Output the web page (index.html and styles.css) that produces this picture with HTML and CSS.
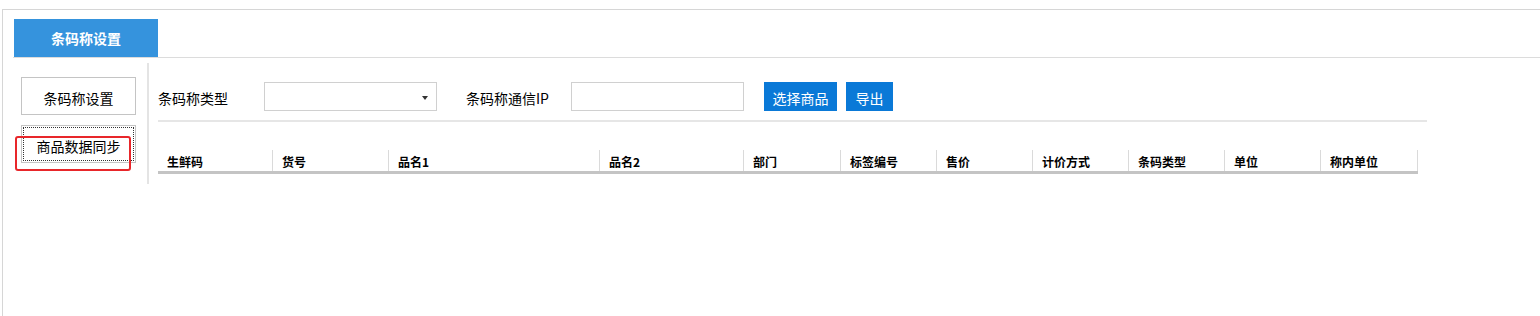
FILE: index.html
```html
<!DOCTYPE html>
<html lang="zh-CN">

<head>
    <meta charset="UTF-8">
    <meta name="viewport" content="width=device-width, initial-scale=1.0">
    <title>条码称设置</title>
    <link rel="stylesheet" href="styles.css">
</head>

<body>

    <div class="frame">
        <!-- 标签页 -->
        <div class="tabs">
            <div class="tab active">条码称设置</div>
        </div>

        <div class="content">
            <!-- 左侧菜单 -->
            <div class="sidebar">
                <button class="side-btn">条码称设置</button>
                <button class="side-btn focused">商品数据同步</button>
                <div class="mark"></div>
            </div>

            <!-- 主体 -->
            <div class="main">
                <div class="toolbar">
                    <label class="field-label">条码称类型</label>
                    <div class="select-box"><span class="arrow"></span></div>
                    <label class="field-label ip-label">条码称通信IP</label>
                    <input class="text-box" type="text">
                    <button class="btn-blue pick">选择商品</button>
                    <button class="btn-blue export">导出</button>
                </div>

                <div class="grid-header">
                    <div class="col" style="width: 115px;">生鲜码</div>
                    <div class="col" style="width: 116px;">货号</div>
                    <div class="col" style="width: 211px;">品名1</div>
                    <div class="col" style="width: 144px;">品名2</div>
                    <div class="col" style="width: 97px;">部门</div>
                    <div class="col" style="width: 96px;">标签编号</div>
                    <div class="col" style="width: 96px;">售价</div>
                    <div class="col" style="width: 96px;">计价方式</div>
                    <div class="col" style="width: 96px;">条码类型</div>
                    <div class="col" style="width: 96px;">单位</div>
                    <div class="col" style="width: 97px;">称内单位</div>
                </div>
            </div>
        </div>
    </div>

</body>

</html>
```

FILE: styles.css
```css
/* 基本样式 */
body {
    margin: 0;
    font-family: "Noto Sans CJK SC", "Liberation Sans", sans-serif;
    background-color: #ffffff;
    color: #000;
    overflow: hidden;
}

/* 外框 */
.frame {
    margin: 9px 0 0 2px;
    border-top: 1px solid #d6d6d6;
    border-left: 1px solid #d6d6d6;
    height: 320px;
}

/* 标签页 */
.tabs {
    padding: 9px 0 0 0;
    margin-left: 10px;
    border-bottom: 1px solid #dcdcdc;
    display: flex;
}

.tab {
    margin-left: 1px;
    width: 144px;
    height: 38px;
    display: flex;
    justify-content: center;
    align-items: center;
    font-size: 14px;
    font-weight: bold;
    color: #fff;
}

.tab.active {
    background-color: #3593dd;
}

/* 内容区 */
.content {
    display: flex;
}

.sidebar {
    position: relative;
    width: 146px;
    height: 121px;
    margin-top: 5px;
    border-right: 2px solid #e4e4e4;
    box-sizing: border-box;
    padding: 14px 0 0 18px;
    display: flex;
    flex-direction: column;
    gap: 10px;
}

.side-btn {
    width: 115px;
    height: 38px;
    padding: 3px 0 0 0;
    background-color: #fff;
    border: 1px solid #c4c4c4;
    font-family: inherit;
    font-size: 14px;
    color: #000;
}

.side-btn.focused {
    outline: 1px dotted #333;
    outline-offset: -3px;
}

/* 红色标注框 */
.mark {
    position: absolute;
    left: 12px;
    top: 73px;
    width: 112px;
    height: 31px;
    border: 2px solid #e8262a;
    border-radius: 3px;
}

.main {
    padding: 24px 0 0 9px;
}

/* 工具栏 */
.toolbar {
    width: 1269px;
    height: 29px;
    padding-bottom: 9px;
    border-bottom: 2px solid #e6e6e6;
    display: flex;
    align-items: center;
}

.field-label {
    width: 106px;
    font-size: 14px;
    padding-top: 2px;
}

.ip-label {
    width: 105px;
    margin-left: 29px;
}

.select-box {
    position: relative;
    width: 173px;
    height: 29px;
    box-sizing: border-box;
    border: 1px solid #d0d0d0;
}

.arrow {
    position: absolute;
    right: 8px;
    top: 13px;
    border-left: 3px solid transparent;
    border-right: 3px solid transparent;
    border-top: 4px solid #333;
}

.text-box {
    width: 173px;
    height: 29px;
    box-sizing: border-box;
    border: 1px solid #d0d0d0;
    margin: 0;
    padding: 0;
}

.btn-blue {
    height: 29px;
    border: none;
    background-color: #0a79d7;
    color: #fff;
    font-family: inherit;
    font-size: 14px;
    padding: 2px 0 0 0;
}

.pick {
    width: 73px;
    margin-left: 20px;
}

.export {
    width: 47px;
    margin-left: 9px;
}

/* 表头 */
.grid-header {
    display: flex;
    margin-top: 28px;
    width: 1260px;
    border-bottom: 3px solid #c4c4c4;
}

.col {
    height: 21px;
    box-sizing: border-box;
    border-right: 1px solid #dadada;
    padding: 2px 0 0 9px;
    font-size: 12px;
    font-weight: bold;
    line-height: 19px;
}
```
